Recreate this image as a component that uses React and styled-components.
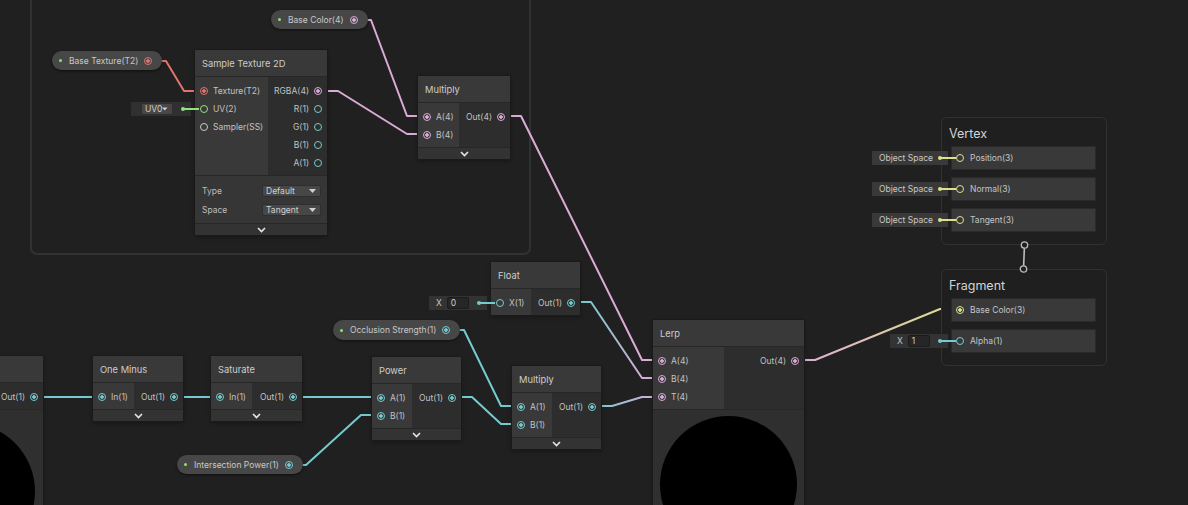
import React from "react";
import styled, { createGlobalStyle } from "styled-components";

const PINK = "#dcaad7";
const CYAN = "#74cbcf";
const RED = "#e3736d";
const GREEN = "#92e180";
const YELLOW = "#dbe18c";
const GREY = "#cacaca";

const GlobalStyle = createGlobalStyle`
  html, body {
    margin: 0;
    padding: 0;
    background: #202020;
  }
  body {
    font-family: Inter, "Noto Sans", "DejaVu Sans", sans-serif;
  }
  * {
    box-sizing: border-box;
  }
`;

const Canvas = styled.div`
  position: relative;
  width: 1188px;
  height: 505px;
  overflow: hidden;
  background: #202020;
  color: #c2c2c2;
  font-size: 8.5px;
`;

const Group = styled.div`
  position: absolute;
  left: 30px;
  top: -20px;
  width: 501px;
  height: 275px;
  border: 2px solid #323232;
  border-radius: 7px;
`;

const WireLayer = styled.svg`
  position: absolute;
  left: 0;
  top: 0;
  pointer-events: none;
`;

const Node = styled.div`
  position: absolute;
  left: ${(p) => p.$x}px;
  top: ${(p) => p.$y}px;
  width: ${(p) => p.$w}px;
  display: flex;
  flex-direction: column;
  background: #2d2d2d;
  box-shadow: 0 0 0 1px #1a1a1a, 0 2px 4px rgba(0, 0, 0, 0.35);
`;

const Header = styled.div`
  height: 27px;
  display: flex;
  align-items: center;
  padding: 0 7px;
  background: #393939;
  border-bottom: 1px solid #272727;
  color: #cdcdcd;
  font-size: 9.3px;
  white-space: nowrap;
`;

const Ports = styled.div`
  display: flex;
`;

const InputCol = styled.div`
  width: ${(p) => p.$w}px;
  flex-shrink: 0;
  padding: 5px 0 3px;
  background: #393939;
`;

const OutputCol = styled.div`
  flex: 1;
  padding: 5px 0 3px;
  background: #2d2d2d;
`;

const PortRow = styled.div`
  position: relative;
  height: 18px;
  display: flex;
  align-items: center;
  flex-direction: ${(p) => (p.$out ? "row-reverse" : "row")};
  gap: 5px;
  padding: 0 5px;
  white-space: nowrap;
`;

const Port = styled.span`
  width: 8px;
  height: 8px;
  flex-shrink: 0;
  border-radius: 50%;
  border: 1.5px solid ${(p) => p.$c};
  background: ${(p) =>
    p.$on ? `radial-gradient(circle, ${p.$c} 0 1.5px, transparent 2px)` : "transparent"};
`;

const Field = styled.div`
  position: absolute;
  right: calc(100% + 4px);
  top: 50%;
  margin-top: -7px;
  width: ${(p) => p.$w}px;
  height: 14px;
  display: flex;
  align-items: center;
  gap: 5px;
  padding-left: ${(p) => p.$pl}px;
  background: ${(p) => p.$bg};
  color: #c8c8c8;
  font-size: 8.5px;
  white-space: nowrap;
`;

const FieldLink = styled.span`
  position: absolute;
  left: calc(100% - 8px);
  top: 6px;
  width: 16px;
  height: 2px;
  background: ${(p) => p.$c};
`;

const FieldDot = styled.span`
  position: absolute;
  right: 6px;
  top: 5px;
  width: 4px;
  height: 4px;
  border-radius: 50%;
  background: ${(p) => p.$c};
`;

const DropBox = styled.div`
  width: ${(p) => p.$w}px;
  height: 12px;
  display: flex;
  align-items: center;
  justify-content: space-between;
  padding: 0 4px 0 3px;
  background: #474747;
  border: 1px solid #2e2e2e;
  border-radius: 2px;
  color: #d0d0d0;
  font-size: 8.5px;
`;

const NumBox = styled.div`
  width: 22px;
  height: 12px;
  display: flex;
  align-items: center;
  padding-left: 3px;
  background: #262626;
  border: 1px solid #1c1c1c;
  border-radius: 2px;
  color: #d0d0d0;
`;

const Controls = styled.div`
  padding: 5px 6px 4px 7px;
  background: #363636;
  border-top: 1px solid #272727;
`;

const ControlRow = styled.div`
  height: 19px;
  display: flex;
  align-items: center;
  justify-content: space-between;
  color: #bdbdbd;
`;

const Collapse = styled.div`
  height: 12px;
  display: flex;
  align-items: center;
  justify-content: center;
  background: #333333;
  border-top: 1px solid #272727;
`;

const Preview = styled.div`
  height: 170px;
  padding: ${(p) => p.$top}px 7px 0;
  background: #2f2f2f;
  border-top: 1px solid #272727;
`;

const Ball = styled.div`
  width: 137px;
  height: 137px;
  border-radius: 50%;
  background: #000;
`;

const Pill = styled.div`
  position: absolute;
  left: ${(p) => p.$x}px;
  top: ${(p) => p.$y}px;
  height: ${(p) => p.$h || 19}px;
  display: flex;
  align-items: center;
  gap: 6px;
  padding: 0 10px 0 7px;
  background: #474747;
  border-radius: 10px;
  box-shadow: 0 1px 3px rgba(0, 0, 0, 0.55);
  color: #c8c8c8;
  white-space: nowrap;
`;

const PillDot = styled.span`
  width: 3px;
  height: 3px;
  border-radius: 50%;
  background: #8fe06b;
  margin-right: 1px;
`;

const Stack = styled.div`
  position: absolute;
  left: 941px;
  top: 117px;
  width: 166px;
  display: flex;
  flex-direction: column;
  align-items: center;
`;

const Block = styled.div`
  width: 100%;
  padding: 0 10px 12px 9px;
  border: 1px solid #313131;
  border-radius: 6px;
  background: #1f1f1f;
`;

const BlockTitle = styled.div`
  height: 28px;
  display: flex;
  align-items: center;
  margin-left: -2px;
  padding-top: 2px;
  color: #d4d4d4;
  font-size: 12.5px;
`;

const SlotList = styled.div`
  display: flex;
  flex-direction: column;
  gap: 7px;
`;

const Slot = styled.div`
  position: relative;
  height: 24px;
  display: flex;
  align-items: center;
  gap: 6px;
  padding-left: 4px;
  background: #393939;
  border: 1px solid #2a2a2a;
  color: #c4c4c4;
`;

const Tri = () => (
  <svg width="7" height="4" viewBox="0 0 7 4">
    <path d="M0 0h7L3.5 4z" fill="#d0d0d0" />
  </svg>
);

const Chevron = () => (
  <svg width="9" height="6" viewBox="0 0 9 6">
    <path d="M1 1l3.5 3.5L8 1" fill="none" stroke="#e6e6e6" strokeWidth="1.6" />
  </svg>
);

function InlineField({ kind, c }) {
  if (kind === "uv")
    return (
      <Field $w={60} $pl={10} $bg="#303030">
        <DropBox $w={32}>
          UV0 <Tri />
        </DropBox>
        <FieldLink $c={c} />
        <FieldDot $c={c} />
      </Field>
    );
  if (kind === "space")
    return (
      <Field $w={76} $pl={7} $bg="#393939">
        Object Space
        <FieldLink $c={c} />
        <FieldDot $c={c} />
      </Field>
    );
  return (
    <Field $w={58} $pl={7} $bg="#333333">
      X <NumBox>{kind === "x0" ? "0" : "1"}</NumBox>
      <FieldLink $c={c} />
      <FieldDot $c={c} />
    </Field>
  );
}

function GraphNode({ x, y, w, inW, title, inputs = [], outputs = [], controls, collapse, preview }) {
  return (
    <Node $x={x} $y={y} $w={w}>
      <Header>{title}</Header>
      <Ports>
        <InputCol $w={inW}>
          {inputs.map((p) => (
            <PortRow key={p.label}>
              {p.field && <InlineField kind={p.field} c={p.c} />}
              <Port $c={p.c} $on={p.on} />
              {p.label}
            </PortRow>
          ))}
        </InputCol>
        <OutputCol>
          {outputs.map((p) => (
            <PortRow key={p.label} $out>
              <Port $c={p.c} $on={p.on} />
              {p.label}
            </PortRow>
          ))}
        </OutputCol>
      </Ports>
      {controls && (
        <Controls>
          {controls.map(([label, value]) => (
            <ControlRow key={label}>
              {label}
              <DropBox $w={59}>
                {value} <Tri />
              </DropBox>
            </ControlRow>
          ))}
        </Controls>
      )}
      {collapse && (
        <Collapse>
          <Chevron />
        </Collapse>
      )}
      {preview !== undefined && (
        <Preview $top={preview}>
          <Ball />
        </Preview>
      )}
    </Node>
  );
}

const pin = (label, c, on = true, field) => ({ label, c, on, field });

const nodes = [
  {
    id: "sample",
    x: 195, y: 50, w: 132, inW: 73,
    title: "Sample Texture 2D",
    inputs: [pin("Texture(T2)", RED), pin("UV(2)", GREEN, false, "uv"), pin("Sampler(SS)", GREY, false)],
    outputs: [
      pin("RGBA(4)", PINK),
      pin("R(1)", CYAN, false),
      pin("G(1)", CYAN, false),
      pin("B(1)", CYAN, false),
      pin("A(1)", CYAN, false),
    ],
    controls: [["Type", "Default"], ["Space", "Tangent"]],
    collapse: true,
  },
  {
    id: "mul4",
    x: 418, y: 76, w: 92, inW: 41,
    title: "Multiply",
    inputs: [pin("A(4)", PINK), pin("B(4)", PINK)],
    outputs: [pin("Out(4)", PINK)],
    collapse: true,
  },
  {
    id: "float",
    x: 491, y: 262, w: 89, inW: 40,
    title: "Float",
    inputs: [pin("X(1)", CYAN, false, "x0")],
    outputs: [pin("Out(1)", CYAN)],
  },
  {
    // node scrolled off the left edge; its title is out of view
    id: "offscreen",
    x: -109, y: 356, w: 152, inW: 71,
    title: "",
    outputs: [pin("Out(1)", CYAN)],
    preview: 13,
  },
  {
    id: "oneminus",
    x: 93, y: 356, w: 90, inW: 41,
    title: "One Minus",
    inputs: [pin("In(1)", CYAN)],
    outputs: [pin("Out(1)", CYAN)],
    collapse: true,
  },
  {
    id: "saturate",
    x: 211, y: 356, w: 91, inW: 41,
    title: "Saturate",
    inputs: [pin("In(1)", CYAN)],
    outputs: [pin("Out(1)", CYAN)],
    collapse: true,
  },
  {
    id: "power",
    x: 372, y: 357, w: 89, inW: 40,
    title: "Power",
    inputs: [pin("A(1)", CYAN), pin("B(1)", CYAN)],
    outputs: [pin("Out(1)", CYAN)],
    collapse: true,
  },
  {
    id: "mul1",
    x: 512, y: 366, w: 89, inW: 40,
    title: "Multiply",
    inputs: [pin("A(1)", CYAN), pin("B(1)", CYAN)],
    outputs: [pin("Out(1)", CYAN)],
    collapse: true,
  },
  {
    id: "lerp",
    x: 653, y: 320, w: 151, inW: 71,
    title: "Lerp",
    inputs: [pin("A(4)", PINK), pin("B(4)", PINK), pin("T(4)", PINK)],
    outputs: [pin("Out(4)", PINK)],
    preview: 6,
  },
];

const properties = [
  { label: "Base Color(4)", x: 271, y: 10, c: PINK },
  { label: "Base Texture(T2)", x: 52, y: 51, c: RED },
  { label: "Occlusion Strength(1)", x: 333, y: 320, h: 20, c: CYAN },
  { label: "Intersection Power(1)", x: 177, y: 455, c: CYAN },
];

// [x1, y1, x2, y2, from colour, to colour]
const wires = [
  [146, 61, 204, 91, RED, RED],
  [351, 20, 427, 116, PINK, PINK],
  [318, 91, 427, 134, PINK, PINK],
  [501, 116, 662, 360, PINK, PINK],
  [571, 302, 662, 378, CYAN, PINK],
  [592, 406, 662, 397, CYAN, PINK],
  [795, 360, 960, 309, PINK, YELLOW],
  [34, 397, 102, 397, CYAN, CYAN],
  [174, 397, 220, 397, CYAN, CYAN],
  [292, 397, 381, 397, CYAN, CYAN],
  [286, 465, 381, 415, CYAN, CYAN],
  [452, 397, 521, 424, CYAN, CYAN],
  [444, 330, 521, 406, CYAN, CYAN],
];

const wirePath = (x1, y1, x2, y2, d = 20) =>
  `M${x1} ${y1} L${x1 + d} ${y1} L${x2 - d} ${y2} L${x2} ${y2}`;

const vertexSlots = ["Position(3)", "Normal(3)", "Tangent(3)"];

export default function App() {
  return (
    <>
      <GlobalStyle />
      <Canvas>
        <Group />
        <WireLayer width="1188" height="505">
          <defs>
            {wires.map(([x1, y1, x2, y2, a, b], i) => (
              <linearGradient key={i} id={`w${i}`} gradientUnits="userSpaceOnUse" x1={x1} y1={y1} x2={x2} y2={y2}>
                <stop offset="0" stopColor={a} />
                <stop offset="1" stopColor={b} />
              </linearGradient>
            ))}
          </defs>
          {wires.map(([x1, y1, x2, y2], i) => (
            <path
              key={i}
              d={wirePath(x1, y1, x2, y2)}
              fill="none"
              stroke={`url(#w${i})`}
              strokeWidth="2"
              strokeLinejoin="round"
            />
          ))}
        </WireLayer>

        {nodes.map(({ id, ...n }) => (
          <GraphNode key={id} {...n} />
        ))}

        {properties.map((p) => (
          <Pill key={p.label} $x={p.x} $y={p.y} $h={p.h}>
            <PillDot />
            {p.label}
            <Port $c={p.c} $on />
          </Pill>
        ))}

        <Stack>
          <Block>
            <BlockTitle>Vertex</BlockTitle>
            <SlotList>
              {vertexSlots.map((s) => (
                <Slot key={s}>
                  <InlineField kind="space" c={YELLOW} />
                  <Port $c={YELLOW} />
                  {s}
                </Slot>
              ))}
            </SlotList>
          </Block>
          <svg width="12" height="24" viewBox="0 0 12 24" style={{ overflow: "visible", zIndex: 1 }}>
            <path d="M6.5 0 L5.5 24" stroke="#bdbdbd" strokeWidth="1.6" />
            <circle cx="6.5" cy="0" r="3.2" fill="#1f1f1f" stroke="#bdbdbd" strokeWidth="1.3" />
            <circle cx="5.5" cy="24" r="3.2" fill="#1f1f1f" stroke="#bdbdbd" strokeWidth="1.3" />
          </svg>
          <Block>
            <BlockTitle>Fragment</BlockTitle>
            <SlotList>
              <Slot>
                <Port $c={YELLOW} $on />
                Base Color(3)
              </Slot>
              <Slot>
                <InlineField kind="x1" c={CYAN} />
                <Port $c={CYAN} />
                Alpha(1)
              </Slot>
            </SlotList>
          </Block>
        </Stack>
      </Canvas>
    </>
  );
}
